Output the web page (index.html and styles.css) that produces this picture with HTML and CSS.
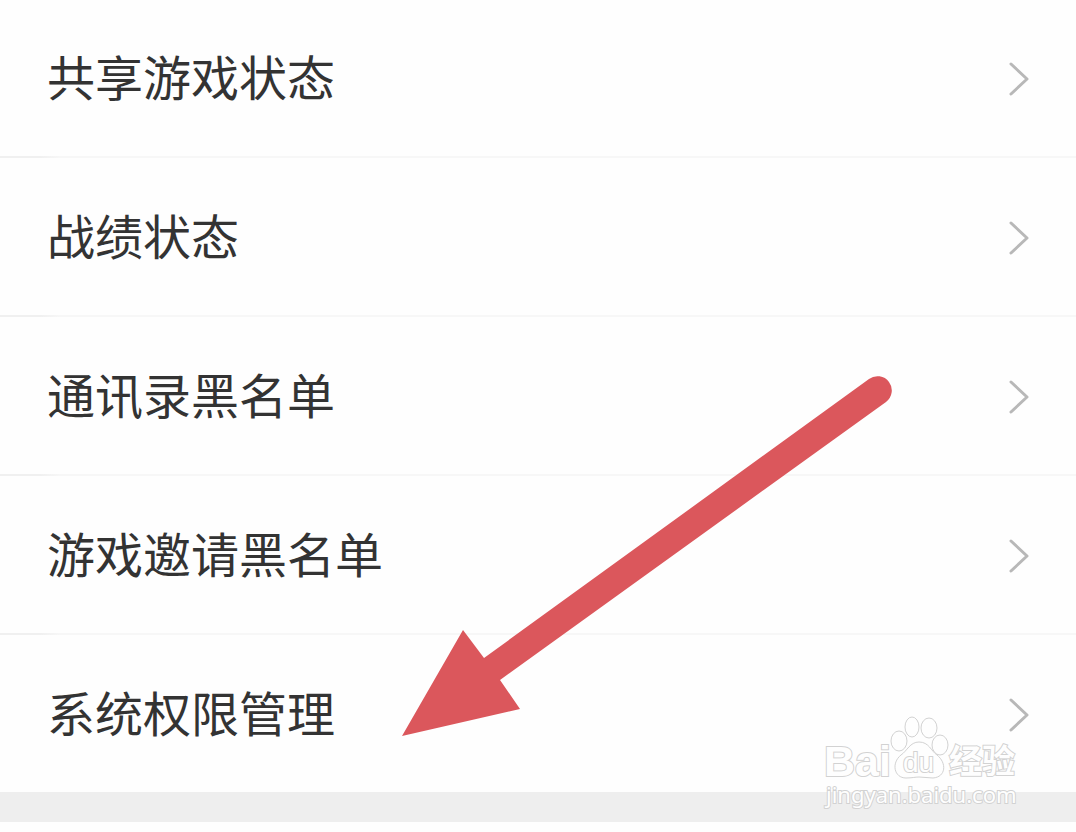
FILE: index.html
```html
<!DOCTYPE html>
<html lang="zh-CN">
<head>
    <meta charset="UTF-8">
    <meta name="viewport" content="width=device-width, initial-scale=1.0">
    <title>设置</title>
    <link rel="stylesheet" href="styles.css">
</head>
<body>

    <!-- Settings list -->
    <nav class="settings-list">
        <a class="row" href="#share">
            <span class="label">共享游戏状态</span>
            <svg class="chevron" viewBox="0 0 22 36"><path d="M3 3 L19 18 L3 33"/></svg>
        </a>
        <a class="row" href="#record">
            <span class="label">战绩状态</span>
            <svg class="chevron" viewBox="0 0 22 36"><path d="M3 3 L19 18 L3 33"/></svg>
        </a>
        <a class="row" href="#contacts">
            <span class="label">通讯录黑名单</span>
            <svg class="chevron" viewBox="0 0 22 36"><path d="M3 3 L19 18 L3 33"/></svg>
        </a>
        <a class="row" href="#invites">
            <span class="label">游戏邀请黑名单</span>
            <svg class="chevron" viewBox="0 0 22 36"><path d="M3 3 L19 18 L3 33"/></svg>
        </a>
        <a class="row" href="#permissions">
            <span class="label">系统权限管理</span>
            <svg class="chevron" viewBox="0 0 22 36"><path d="M3 3 L19 18 L3 33"/></svg>
        </a>
    </nav>
    <div class="divider"></div>

    <!-- Arrow pointing at the last row -->
    <svg class="arrow" viewBox="0 0 492 364">
        <path d="M0 360 L61 254 L82 282 L467 3 A14 14 0 0 1 484 26 L98 304 L118 333 Z"/>
    </svg>

    <!-- Watermark -->
    <svg class="watermark" viewBox="0 0 204 100">
        <text class="brand" x="4" y="64">Bai</text>
        <ellipse cx="79" cy="29" rx="8" ry="10"/>
        <ellipse cx="92" cy="15" rx="7" ry="10"/>
        <ellipse cx="109" cy="16" rx="8" ry="10"/>
        <ellipse cx="120" cy="33" rx="8" ry="10"/>
        <path d="M99 30 C90 30 87 39 81 43 C71 51 74 66 86 66 C92 66 95 65 99 65 C104 65 108 66 113 66 C126 65 127 51 117 43 C111 39 109 30 99 30 Z"/>
        <text class="du" x="83" y="60">du</text>
        <text class="cn" x="129" y="61">经验</text>
        <text class="site" x="6" y="91">jingyan.baidu.com</text>
    </svg>

</body>
</html>
```

FILE: styles.css
```css
* {
    margin: 0;
    padding: 0;
    box-sizing: border-box;
}

body {
    position: relative;
    font-family: "Noto Sans CJK SC", sans-serif;
    background-color: #fefefe;
    color: #333;
}

/* Settings list */
.row {
    display: flex;
    align-items: center;
    justify-content: space-between;
    min-height: 159px;
    padding: 4px 46px 0 47px;
    font-size: 48px;
    line-height: 72px;
    color: #333;
    text-decoration: none;
    background: linear-gradient(to right, #f0f0f0 40px, #f7f7f7 60px) top / 100% 2px no-repeat;
}

.row:first-child {
    min-height: 156px;
    padding-top: 2px;
    background: none;
}

.label {
    padding-bottom: 8px;
}

.chevron {
    width: 22px;
    height: 36px;
    fill: none;
    stroke: #b8b8b8;
    stroke-width: 3;
    stroke-linecap: round;
    stroke-linejoin: round;
}

.divider {
    height: 30px;
    background-color: #eeeeee;
}

/* Arrow */
.arrow {
    position: absolute;
    left: 402px;
    top: 376px;
    width: 492px;
    height: 364px;
    fill: #db575c;
    pointer-events: none;
}

/* Watermark */
.watermark {
    position: absolute;
    right: 52px;
    top: 712px;
    width: 204px;
    height: 100px;
    fill: #fefefe;
    stroke: #d2d2d2;
    stroke-width: 1;
    pointer-events: none;
}

.watermark text {
    paint-order: stroke;
    stroke-width: 2;
}

.watermark .brand {
    font: bold 43px "Liberation Sans", sans-serif;
}

.watermark .du {
    font: 28px "Liberation Sans", sans-serif;
}

.watermark .cn {
    font: bold 33px "Noto Sans CJK SC", sans-serif;
}

.watermark .site {
    font: 22px "Noto Sans", sans-serif;
}
```
